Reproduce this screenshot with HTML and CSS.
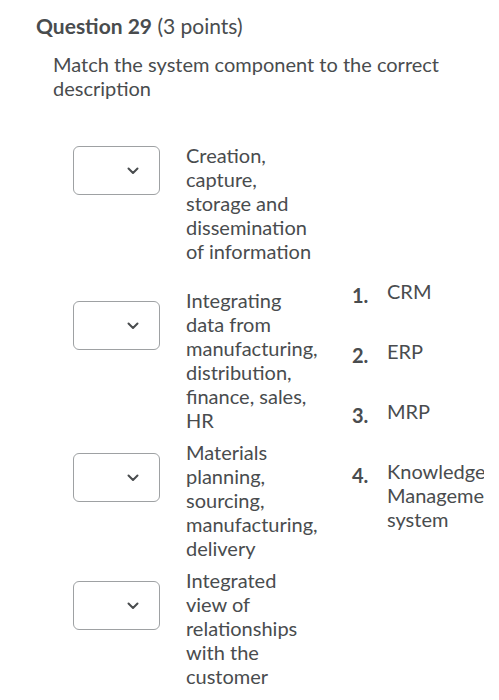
FILE: index.html
```html
<!DOCTYPE html>
<html lang="en">
<head>
<meta charset="utf-8">
<title>Question 29</title>
<link rel="stylesheet" href="styles.css">
</head>
<body>
<div class="page">
  <h2 class="title"><strong>Question 29</strong> (3 points)</h2>
  <p class="prompt">Match the system component to the correct description</p>
  <div class="match">
    <div class="pairs">
      <div class="pair pair-1">
        <div class="select"><svg class="chev" width="12" height="8" viewBox="0 0 12 8"><path d="M1.5 1.5 L6 6 L10.5 1.5" fill="none" stroke="#494c4e" stroke-width="2" stroke-linecap="round" stroke-linejoin="round"/></svg></div>
        <div class="desc">Creation, capture, storage and dissemination of information</div>
      </div>
      <div class="pair pair-2">
        <div class="select"><svg class="chev" width="12" height="8" viewBox="0 0 12 8"><path d="M1.5 1.5 L6 6 L10.5 1.5" fill="none" stroke="#494c4e" stroke-width="2" stroke-linecap="round" stroke-linejoin="round"/></svg></div>
        <div class="desc">Integrating data from manufacturing, distribution, finance, sales, HR</div>
      </div>
      <div class="pair pair-3">
        <div class="select"><svg class="chev" width="12" height="8" viewBox="0 0 12 8"><path d="M1.5 1.5 L6 6 L10.5 1.5" fill="none" stroke="#494c4e" stroke-width="2" stroke-linecap="round" stroke-linejoin="round"/></svg></div>
        <div class="desc">Materials planning, sourcing, manufacturing, delivery</div>
      </div>
      <div class="pair pair-4">
        <div class="select"><svg class="chev" width="12" height="8" viewBox="0 0 12 8"><path d="M1.5 1.5 L6 6 L10.5 1.5" fill="none" stroke="#494c4e" stroke-width="2" stroke-linecap="round" stroke-linejoin="round"/></svg></div>
        <div class="desc">Integrated view of relationships with the customer</div>
      </div>
    </div>
    <ol class="choices">
      <li class="choice"><span class="num">1.</span><span class="ctext">CRM</span></li>
      <li class="choice"><span class="num">2.</span><span class="ctext">ERP</span></li>
      <li class="choice"><span class="num">3.</span><span class="ctext">MRP</span></li>
      <li class="choice"><span class="num">4.</span><span class="ctext">Knowledge Management system</span></li>
    </ol>
  </div>
</div>
</body>
</html>
```

FILE: styles.css
```css
html, body {
  margin: 0;
  padding: 0;
  background: #ffffff;
  overflow: hidden;
}

body {
  font-family: Lato, "Open Sans", sans-serif;
  color: #494c4e;
}

.page {
  padding: 14px 0 0 36px;
  width: 448px;
  overflow: hidden;
}

.title {
  margin: 0;
  font-size: 21px;
  font-weight: 400;
  line-height: 23px;
}

.title strong {
  font-weight: 700;
}

.prompt {
  margin: 15px 0 0 17px;
  font-size: 20px;
  line-height: 24px;
  width: 400px;
}

.match {
  display: flex;
  align-items: flex-start;
  margin-top: 43px;
  margin-left: 37px;
  font-size: 20px;
  line-height: 24px;
}

.pairs {
  display: flex;
  flex-direction: column;
  width: 279px;
  flex: none;
}

.pair {
  display: flex;
  align-items: flex-start;
}

.pair-2 { margin-top: 25px; }
.pair-3 { margin-top: 8px; }
.pair-4 { margin-top: 8px; }

.select {
  box-sizing: border-box;
  width: 87px;
  height: 49px;
  border: 1px solid #9ea1a3;
  border-radius: 6px;
  display: flex;
  align-items: center;
  justify-content: flex-end;
  padding-right: 20px;
  flex: none;
}

.pair-1 .select { margin-top: 3px; }
.pair-2 .select,
.pair-3 .select,
.pair-4 .select { margin-top: 13px; }

.chev {
  display: block;
}

.desc {
  margin-left: 26px;
  width: 134px;
}

.choices {
  list-style: none;
  margin: 136px 0 0 0;
  padding: 0;
  display: flex;
  flex-direction: column;
  gap: 32px;
  flex: none;
}

.choice {
  display: flex;
  align-items: flex-start;
}

.num {
  width: 35px;
  flex: none;
  font-weight: 700;
  padding-top: 4px;
}

.ctext {
  width: 140px;
}
```
